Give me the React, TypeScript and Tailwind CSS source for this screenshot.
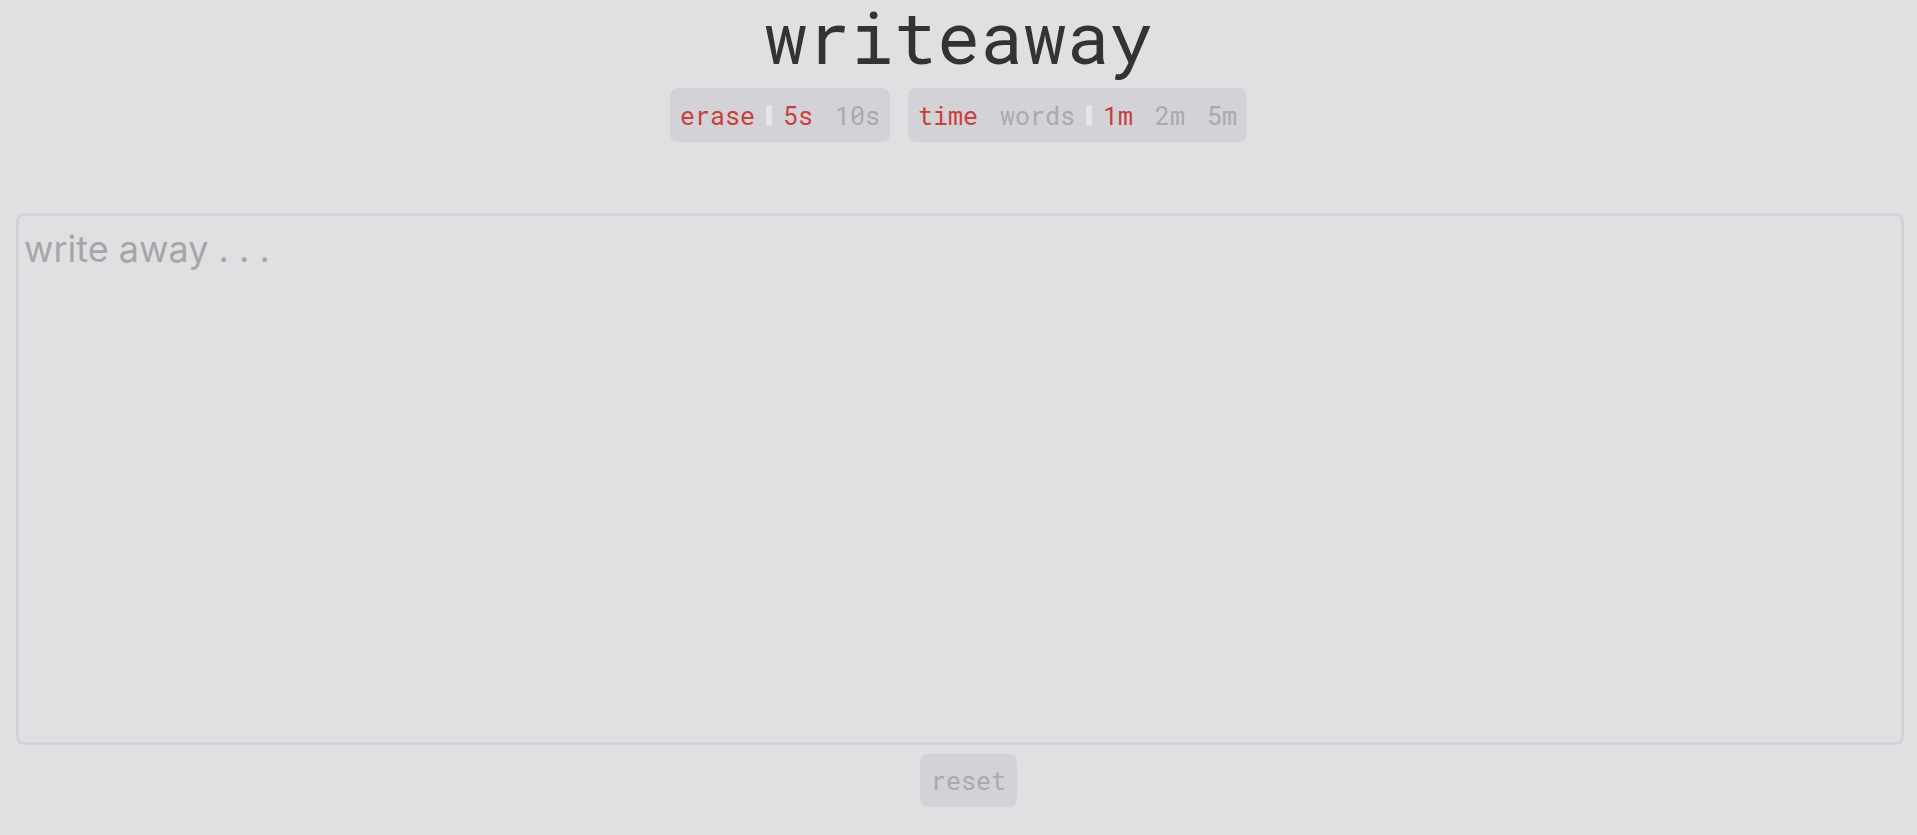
import { useState } from 'react';

const mono = "font-['Roboto_Mono','DejaVu_Sans_Mono','Liberation_Mono',monospace]";

const Sep = () => <span className="mx-[11px] h-[21px] w-[6px] rounded-full bg-[#e6e6e9]" />;

const Option = ({ label, active }: { label: string; active?: boolean }) => (
  <span className={active ? 'text-[#c9403b]' : 'text-[#a9a9ae]'}>{label}</span>
);

export default function App() {
  const [text, setText] = useState('');

  return (
    <div className={`min-h-screen w-full bg-[#e0e0e3] ${mono}`}>
      <div className="flex flex-col items-center pt-[1px]">
        <h1 className="text-[72px] leading-[72px] text-[#333336]">writeaway</h1>

        <div className="mt-[15px] flex gap-[18px] text-[25px] font-[450] leading-none">
          <div className="flex h-[54px] items-center rounded-lg bg-[#d2d2d7] px-[10px]">
            <Option label="erase" active />
            <Sep />
            <div className="flex gap-[22px]">
              <Option label="5s" active />
              <Option label="10s" />
            </div>
          </div>
          <div className="flex h-[54px] items-center rounded-lg bg-[#d2d2d7] px-[10px]">
            <div className="flex gap-[22px]">
              <Option label="time" active />
              <Option label="words" />
            </div>
            <Sep />
            <div className="flex gap-[22px]">
              <Option label="1m" active />
              <Option label="2m" />
              <Option label="5m" />
            </div>
          </div>
        </div>
      </div>

      <div className="ml-[16px] mr-[13px] mt-[71px]">
        <textarea
          value={text}
          onChange={(e) => setText(e.target.value)}
          placeholder="write away . . ."
          className="block h-[532px] w-full resize-none rounded-lg border-[3px] border-[#d2d2d7] bg-transparent px-[5px] pt-[12px] font-['Inter','Roboto',sans-serif] text-[36px] leading-[1.2] text-[#333336] outline-none placeholder:text-[#a6a6a8]"
        />
      </div>

      <div className="mt-[9px] flex justify-center pl-[20px]">
        <button className="h-[53px] rounded-lg bg-[#d2d2d7] px-[11px] text-[25px] font-[450] leading-none text-[#a9a9ae]">
          reset
        </button>
      </div>
    </div>
  );
}
